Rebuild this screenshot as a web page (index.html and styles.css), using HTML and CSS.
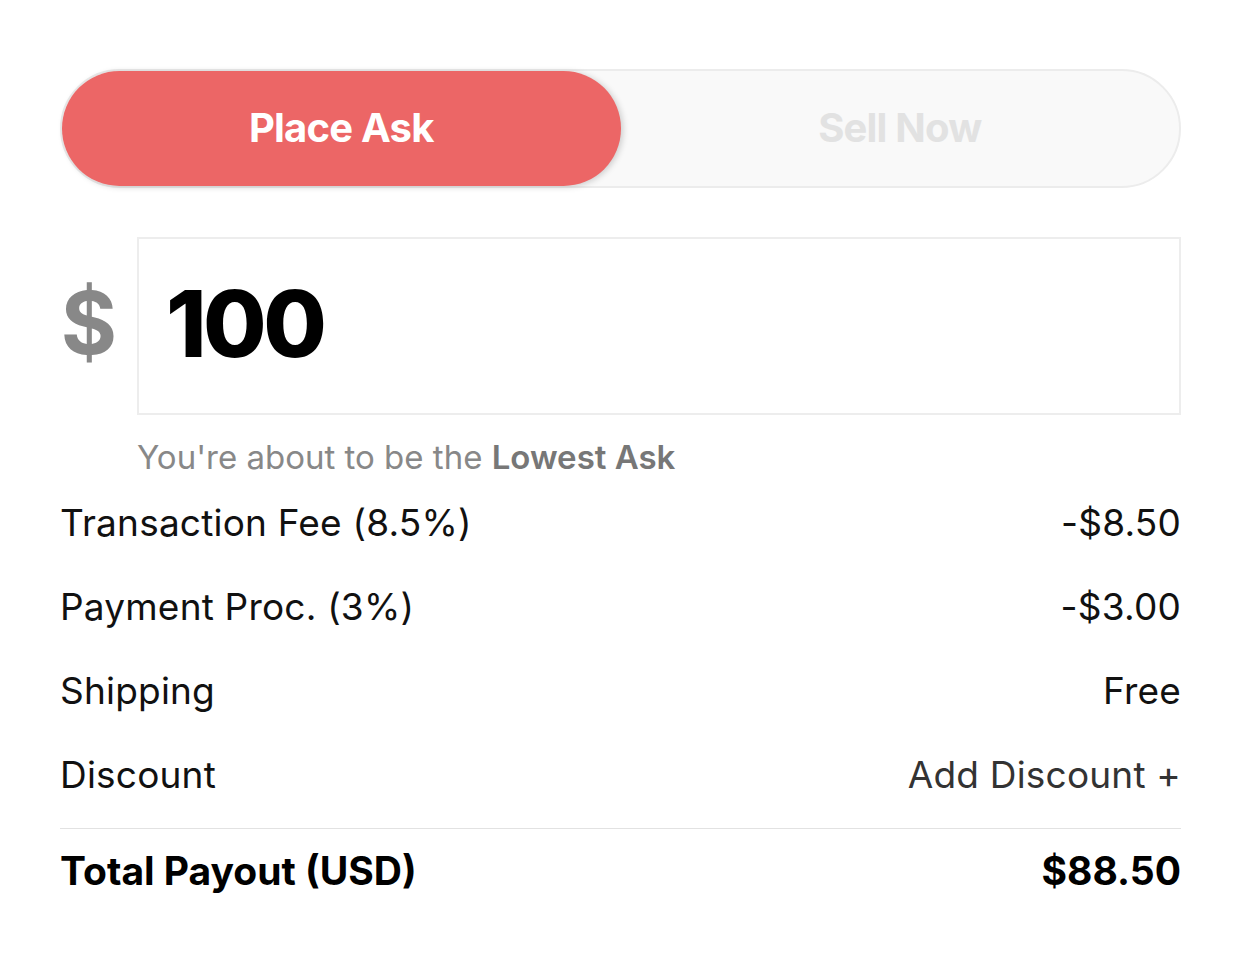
FILE: index.html
```html
<!DOCTYPE html>
<html lang="en">
<head>
    <meta charset="UTF-8">
    <meta name="viewport" content="width=device-width, initial-scale=1.0">
    <title>Place Ask</title>
    <link rel="stylesheet" href="styles.css">
</head>
<body>
    <div class="panel">
        <div class="toggle">
            <div class="toggle-option active">Place Ask</div>
            <div class="toggle-option">Sell Now</div>
        </div>

        <div class="price-row">
            <span class="currency">$</span>
            <div class="price-box">100</div>
        </div>
        <p class="hint">You're about to be the <strong>Lowest Ask</strong></p>

        <div class="summary">
            <div class="line">
                <span>Transaction Fee (8.5%)</span>
                <span>-$8.50</span>
            </div>
            <div class="line">
                <span>Payment Proc. (3%)</span>
                <span>-$3.00</span>
            </div>
            <div class="line">
                <span>Shipping</span>
                <span>Free</span>
            </div>
            <div class="line">
                <span>Discount</span>
                <span class="link">Add Discount +</span>
            </div>
        </div>

        <div class="line total">
            <span>Total Payout (USD)</span>
            <span>$88.50</span>
        </div>
    </div>
</body>
</html>
```

FILE: styles.css
```css
body {
    margin: 0;
    background-color: #fff;
    font-family: Inter, Lato, sans-serif;
    color: #111;
}
.panel {
    width: 1121px;
    margin: 0 0 0 60px;
    padding-top: 69px;
}
.toggle {
    display: flex;
    height: 119px;
    box-sizing: border-box;
    border: 2px solid #ececec;
    border-radius: 60px;
    background-color: #f9f9f9;
}
.toggle-option {
    flex: 1;
    display: flex;
    align-items: center;
    justify-content: center;
    padding-bottom: 2px;
    font-size: 40px;
    font-weight: 700;
    letter-spacing: -0.8px;
    color: #e2e2e2;
    border-radius: 58px;
}
.toggle-option.active {
    background-color: #ec6666;
    color: #fff;
    box-shadow: 2px 1px 6px rgba(0,0,0,0.18);
}
.price-row {
    display: flex;
    align-items: center;
    margin-top: 49px;
    gap: 19px;
}
.currency {
    width: 58px;
    padding-bottom: 6px;
    font-size: 86px;
    font-weight: 700;
    color: #888;
    text-align: center;
}
.price-box {
    flex: 1;
    height: 178px;
    box-sizing: border-box;
    border: 2px solid #ededed;
    display: flex;
    align-items: center;
    padding-left: 27px;
    padding-bottom: 6px;
    font-size: 92px;
    font-weight: 800;
    letter-spacing: -3.5px;
    color: #000;
}
.hint {
    margin: 22px 0 4px 77px;
    line-height: 40px;
    font-size: 33px;
    color: #888;
}
.hint strong {
    font-weight: 600;
    color: #777;
}
.summary {
    border-bottom: 1px solid #e2e2e2;
    padding-bottom: 11px;
}
.line {
    display: flex;
    justify-content: space-between;
    align-items: center;
    height: 84px;
    padding-bottom: 2px;
    box-sizing: border-box;
    font-size: 37px;
    letter-spacing: 0.2px;
}
.line .link {
    color: #333;
}
.total {
    font-weight: 700;
    font-size: 39px;
    letter-spacing: 0;
    color: #000;
}
```
